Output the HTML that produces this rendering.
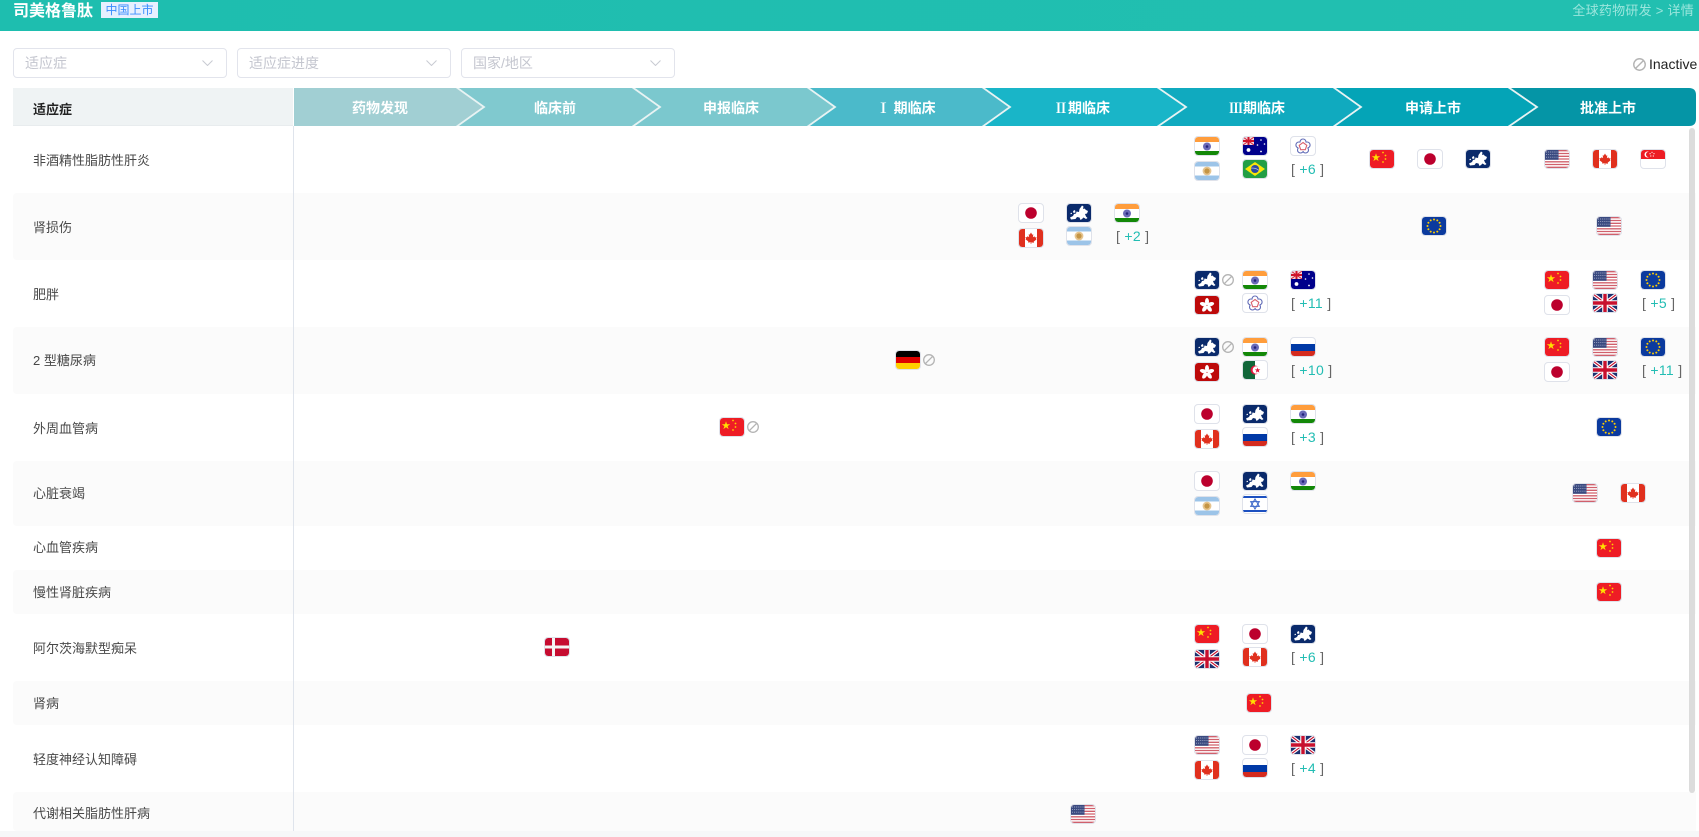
<!DOCTYPE html>
<html lang="zh"><head><meta charset="utf-8"><title>司美格鲁肽</title>
<style>
*{box-sizing:border-box}
html,body{margin:0;padding:0;width:1699px;height:837px;overflow:hidden;background:#fff}
body{position:relative;font-family:"Liberation Sans","Noto Sans CJK SC",sans-serif;color:#444}
div,span,svg.f,svg.n{position:absolute}
.hd{left:0;top:0;width:1699px;height:31px;background:linear-gradient(90deg,#1ebeaf,#22bfb0)}
.t{left:13px;top:0;font-size:16px;line-height:24px;font-weight:700;color:#fff;white-space:nowrap}
.tag{left:101px;top:2px;width:57px;height:16px;background:#e6f0ff;color:#3a8dff;font-size:12px;line-height:16px;text-align:center;white-space:nowrap}
.bc{right:5px;top:1px;font-size:13px;line-height:20px;letter-spacing:.25px;color:#9be6dd;white-space:nowrap}
.s{top:48px;width:214px;height:30px;border:1px solid #e2e4ec;border-radius:4px;background:#fff}
.s span{left:11px;top:4px;font-size:14px;line-height:20px;color:#c4c6cf;white-space:nowrap}
.s svg{position:absolute;right:13px;top:11px}
.ina{left:1649px;top:55px;font-size:14px;line-height:18px;color:#222;white-space:nowrap}
.th0{left:13px;top:88px;width:280px;height:38px;background:#eff3f4;border-bottom:1px solid #e8ecee}
.th0 span{left:20px;top:12px;font-size:13px;line-height:20px;font-weight:700;color:#222;white-space:nowrap}
.stg{top:88px;height:38px;width:120px;font-family:"Noto Sans CJK SC",sans-serif;line-height:40px;font-size:14px;font-weight:700;color:#fff;text-align:center;white-space:nowrap}
.stg i{font-style:normal;font-family:"Noto Serif CJK SC",serif;font-weight:700}
.r{left:13px;width:1683px;background:#fbfbfb;border-radius:4px 0 0 4px}
.l{left:33px;width:250px;font-size:13px;line-height:20px;color:#484848;white-space:nowrap}
.f{width:24px;height:18px;border-radius:3px;outline:1px solid #dfe2ea;overflow:hidden}
.n{width:12px;height:12px}
.m{font-size:14px;line-height:18px;letter-spacing:.3px;white-space:pre;color:#666}
.m b{font-weight:400;color:#22bdb3}
</style></head><body>
<svg width="0" height="0" style="position:absolute">
<defs>
<symbol id="cn" viewBox="0 0 24 18"><rect width="24" height="18" fill="#ee1c25"/><path d="M6 3.200l1 3h3.200l-2.600 1.900 1 3-2.600-1.900-2.600 1.900 1-3-2.600-1.900h3.200z" fill="#ffe000"/><g fill="#ffcf00"><circle cx="13" cy="2.500" r=".9"/><circle cx="15.500" cy="5.500" r=".9"/><circle cx="15.500" cy="9" r=".9"/><circle cx="13" cy="12" r=".9"/></g></symbol>
<symbol id="jp" viewBox="0 0 24 18"><rect width="24" height="18" fill="#fff"/><circle cx="12" cy="9" r="5.800" fill="#bc002d"/></symbol>
<symbol id="in" viewBox="0 0 24 18"><rect width="24" height="18" fill="#fff"/><rect width="24" height="5" fill="#ff9d3c"/><rect y="14" width="24" height="4" fill="#138808"/><circle cx="12" cy="9.500" r="4" fill="#6a6ab8"/><circle cx="12" cy="9.500" r="1.300" fill="#23237a"/></symbol>
<symbol id="au" viewBox="0 0 24 18"><rect width="24" height="18" fill="#00008b"/><rect width="11" height="8" fill="#f3d6da"/><path d="M4.500 0h2v8h-2zM0 3h11v2H0z" fill="#cf142b"/><path d="M0 0l11 8M11 0L0 8" stroke="#cf142b" stroke-width=".8"/><g fill="#fff"><circle cx="5.500" cy="13" r="1.900"/><circle cx="18" cy="3" r=".8"/><circle cx="18" cy="14.500" r=".9"/><circle cx="14.500" cy="8" r=".8"/><circle cx="21.500" cy="7" r=".8"/></g></symbol>
<symbol id="tw" viewBox="0 0 24 18"><rect width="24" height="18" fill="#fff"/><g fill="#fff" stroke="#5f6ab6" stroke-width="1.100"><circle cx="12" cy="5" r="3"/><circle cx="16.100" cy="8" r="3"/><circle cx="14.500" cy="13" r="3"/><circle cx="9.500" cy="13" r="3"/><circle cx="7.900" cy="8" r="3"/></g><circle cx="12" cy="9.300" r="4.800" fill="#fff"/><path d="M12 5.500l3.800 2.800-1.500 4.400H9.700L8.200 8.300z" fill="#fff" stroke="#d9606c" stroke-width="1.100"/></symbol>
<symbol id="ar" viewBox="0 0 24 18"><rect width="24" height="18" fill="#fff"/><rect width="24" height="4.500" fill="#9cc4e8"/><rect y="13.500" width="24" height="4.500" fill="#9cc4e8"/><circle cx="12" cy="9" r="4.400" fill="#e6c48e"/><circle cx="12" cy="9" r="2.600" fill="#c49545"/></symbol>
<symbol id="br" viewBox="0 0 24 18"><rect width="24" height="18" fill="#229e45"/><path d="M12 2l10 7-10 7L2 9z" fill="#f8e509"/><circle cx="12" cy="9" r="4" fill="#2b49a3"/><path d="M8.200 8.200q4-.6 7.500 2" stroke="#ddd" stroke-width=".6" fill="none"/></symbol>
<symbol id="em" viewBox="0 0 24 18"><rect width="24" height="18" fill="#0a2a6b"/><path d="M15 1.500l1.500 1-.5 2.500 1.500-.5 1.500 1.500 2 1-1 2.500-2 .5 1 2.500 1.500 1.500-1.500 1-2.500-1.500-1.500 1.500-1.500 1-1-2.500-2.500-.5-1.500 2-4.500.5-1-2 3-1.500 1-2 2-.5.500-2 2.500.5.500-3 1.500-2z" fill="#fff"/><path d="M6 7l2-1 .5 2.500-2 .5zM3.500 9l1.300-.3.200 1.200-1.300.3z" fill="#fff"/></symbol>
<symbol id="eu" viewBox="0 0 24 18"><rect width="24" height="18" fill="#0b3a9e"/><g fill="#ffcc00"><circle cx="12" cy="2.500" r="1"/><circle cx="15.300" cy="3.400" r="1"/><circle cx="17.600" cy="5.700" r="1"/><circle cx="18.500" cy="9" r="1"/><circle cx="17.600" cy="12.300" r="1"/><circle cx="15.300" cy="14.600" r="1"/><circle cx="12" cy="15.500" r="1"/><circle cx="8.700" cy="14.600" r="1"/><circle cx="6.400" cy="12.300" r="1"/><circle cx="5.500" cy="9" r="1"/><circle cx="6.400" cy="5.700" r="1"/><circle cx="8.700" cy="3.400" r="1"/></g></symbol>
<symbol id="us" viewBox="0 0 24 18"><rect width="24" height="18" fill="#fff"/><path d="M0 .7h24M0 3.500h24M0 6.300h24M0 9h24M0 11.800h24M0 14.500h24M0 17.300h24" stroke="#d0606c" stroke-width="1.300"/><rect width="13.500" height="9.800" fill="#3a4a80"/><path d="M1 2h12M1 4.600h12M1 7.200h12" stroke="#a3abc9" stroke-width=".9" stroke-dasharray="1 1.100"/></symbol>
<symbol id="ca" viewBox="0 0 24 18"><rect width="24" height="18" fill="#fff"/><rect width="6" height="18" fill="#e0301e"/><rect x="18" width="6" height="18" fill="#e0301e"/><path d="M12 3.500l1.300 2.300 1-.5-.4 3 1.600-1 .4 1.100 1.700-.2-.6 1.800.6.400-2.900 2.200.3 1.100-2.700-.3V15h-.6v-1.800l-2.700.3.300-1.100-2.900-2.200.6-.4-.6-1.800 1.700.2.400-1.100 1.600 1-.4-3 1 .5z" fill="#e0301e"/></symbol>
<symbol id="sg" viewBox="0 0 24 18"><rect width="24" height="18" fill="#fff"/><rect width="24" height="9" fill="#ed1c24"/><circle cx="6.500" cy="4.500" r="3" fill="#fff"/><circle cx="7.700" cy="4.500" r="2.700" fill="#ed1c24"/><g fill="#fff"><circle cx="11" cy="2.300" r=".6"/><circle cx="13" cy="3.700" r=".6"/><circle cx="12.300" cy="6" r=".6"/><circle cx="9.800" cy="6" r=".6"/><circle cx="9.100" cy="3.700" r=".6"/></g></symbol>
<symbol id="hk" viewBox="0 0 24 18"><rect width="24" height="18" fill="#bd0a0a"/><g fill="#fff"><ellipse cx="12" cy="5.500" rx="2" ry="3.500"/><ellipse cx="12" cy="5.500" rx="2" ry="3.500" transform="rotate(72 12 9.400)"/><ellipse cx="12" cy="5.500" rx="2" ry="3.500" transform="rotate(144 12 9.400)"/><ellipse cx="12" cy="5.500" rx="2" ry="3.500" transform="rotate(216 12 9.400)"/><ellipse cx="12" cy="5.500" rx="2" ry="3.500" transform="rotate(288 12 9.400)"/></g></symbol>
<symbol id="ru" viewBox="0 0 24 18"><rect width="24" height="18" fill="#fff"/><rect y="6" width="24" height="7" fill="#0039a6"/><rect y="13" width="24" height="5" fill="#d52b1e"/></symbol>
<symbol id="dz" viewBox="0 0 24 18"><rect width="24" height="18" fill="#fff"/><rect width="12" height="18" fill="#11663a"/><circle cx="12" cy="9" r="4.500" fill="#e3173e"/><circle cx="13.300" cy="9" r="3.700" fill="#fff"/><path d="M14.500 6.500l.8 1.900 2-.1-1.500 1.300.6 2-1.800-1.100-1.700 1.100.5-2-1.500-1.300 2 .1z" fill="#e3173e"/></symbol>
<symbol id="il" viewBox="0 0 24 18"><rect width="24" height="18" fill="#fff"/><rect y="1" width="24" height="2" fill="#1c50c0"/><rect y="15" width="24" height="2" fill="#1c50c0"/><path d="M12 4l4.300 7.400H7.700zM12 14L7.700 6.600h8.600z" fill="none" stroke="#3a66c8" stroke-width="1"/></symbol>
<symbol id="de" viewBox="0 0 24 18"><rect width="24" height="6" fill="#000"/><rect y="6" width="24" height="6" fill="#dd0000"/><rect y="12" width="24" height="6" fill="#ffce00"/></symbol>
<symbol id="dk" viewBox="0 0 24 18"><rect width="24" height="18" fill="#c60c30"/><rect x="7" width="3" height="18" fill="#f4f4f4"/><rect y="7.500" width="24" height="3" fill="#f4f4f4"/></symbol>
<symbol id="gb" viewBox="0 0 24 18"><rect width="24" height="18" fill="#1b2f6e"/><path d="M0 0l24 18M24 0L0 18" stroke="#fff" stroke-width="3.400"/><path d="M0 0l24 18M24 0L0 18" stroke="#c8102e" stroke-width="1.100"/><path d="M12 0v18M0 9h24" stroke="#fff" stroke-width="5.600"/><path d="M12 0v18M0 9h24" stroke="#c8102e" stroke-width="3.400"/></symbol>
<symbol id="no" viewBox="0 0 12 12"><circle cx="6" cy="6" r="5.300" fill="none" stroke="#b4b4b4" stroke-width="1.300"/><path d="M2.400 9.600L9.600 2.400" stroke="#b4b4b4" stroke-width="1.300"/></symbol>
</defs></svg>

<div class="hd"></div>
<div class="t">司美格鲁肽</div>
<div class="tag">中国上市</div>
<div class="bc">全球药物研发 &gt; 详情</div>

<div class="s" style="left:13px"><span>适应症</span><svg width="11" height="6" viewBox="0 0 11 6"><path d="M.5.500l5 5 5-5" fill="none" stroke="#c8cad2"/></svg></div>
<div class="s" style="left:237px"><span>适应症进度</span><svg width="11" height="6" viewBox="0 0 11 6"><path d="M.5.500l5 5 5-5" fill="none" stroke="#c8cad2"/></svg></div>
<div class="s" style="left:461px"><span>国家/地区</span><svg width="11" height="6" viewBox="0 0 11 6"><path d="M.5.500l5 5 5-5" fill="none" stroke="#c8cad2"/></svg></div>
<svg class="n" style="left:1633px;top:58px;width:13px;height:13px"><use href="#no"/></svg>
<div class="ina">Inactive</div>

<!-- striped rows -->
<div class="r" style="top:193px;height:67px"></div>
<div class="r" style="top:327px;height:67px"></div>
<div class="r" style="top:461px;height:65px"></div>
<div class="r" style="top:570px;height:44px"></div>
<div class="r" style="top:681px;height:44px"></div>
<div class="r" style="top:792px;height:39px"></div>
<div style="left:0;top:831px;width:1699px;height:6px;background:#f6f7f8"></div>
<div style="left:293px;top:126px;width:1px;height:705px;background:#dfe4ec"></div>
<div style="left:1689px;top:128px;width:6px;height:665px;background:#dcdcdc;border-radius:3px"></div>

<!-- table head -->
<div class="th0"><span>适应症</span></div>
<svg style="position:absolute;left:0;top:88px" width="1699" height="38" viewBox="0 88 1699 38">
<rect x="294" y="88" width="900" height="38" fill="#a1cfd3"/>
<path d="M456 88h176l28 19-28 19H456l28-19z" fill="#80c9cf"/>
<path d="M632 88h175l28 19-28 19H632l28-19z" fill="#7bc8ce"/>
<path d="M807 88h175l28 19-28 19H807l28-19z" fill="#4bbaca"/>
<path d="M982 88h175l29 19-29 19H982l28-19z" fill="#19b5c8"/>
<path d="M1157 88h176l28 19-28 19h-176l29-19z" fill="#10aabf"/>
<path d="M1333 88h175l29 19-29 19h-175l28-19z" fill="#04a4b7"/>
<path d="M1508 88h181q7 0 7 7v24q0 7-7 7h-181l29-19z" fill="#0595a6"/>
<path d="M456 87l28 20-28 20M632 87l28 20-28 20M807 87l28 20-28 20M982 87l28 20-28 20M1157 87l29 20-29 20M1333 87l28 20-28 20M1508 87l29 20-29 20" fill="none" stroke="#e8f3f3" stroke-width="1.800"/>
</svg>
<div class="stg" style="left:320px">药物发现</div>
<div class="stg" style="left:495px">临床前</div>
<div class="stg" style="left:671px">申报临床</div>
<div class="stg" style="left:846px"><i>Ⅰ</i> 期临床</div>
<div class="stg" style="left:1022px"><i>Ⅱ</i>期临床</div>
<div class="stg" style="left:1197px"><i>Ⅲ</i>期临床</div>
<div class="stg" style="left:1373px">申请上市</div>
<div class="stg" style="left:1548px">批准上市</div>

<!-- row labels -->
<div class="l" style="top:151px">非酒精性脂肪性肝炎</div>
<div class="l" style="top:218px">肾损伤</div>
<div class="l" style="top:285px">肥胖</div>
<div class="l" style="top:351px">2 型糖尿病</div>
<div class="l" style="top:419px">外周血管病</div>
<div class="l" style="top:484px">心脏衰竭</div>
<div class="l" style="top:538px">心血管疾病</div>
<div class="l" style="top:583px">慢性肾脏疾病</div>
<div class="l" style="top:639px">阿尔茨海默型痴呆</div>
<div class="l" style="top:694px">肾病</div>
<div class="l" style="top:750px">轻度神经认知障碍</div>
<div class="l" style="top:804px">代谢相关脂肪性肝病</div>

<!-- R1 -->
<svg class="f" style="left:1195px;top:137px"><use href="#in"/></svg>
<svg class="f" style="left:1243px;top:137px"><use href="#au"/></svg>
<svg class="f" style="left:1291px;top:137px"><use href="#tw"/></svg>
<svg class="f" style="left:1195px;top:162px"><use href="#ar"/></svg>
<svg class="f" style="left:1243px;top:160px"><use href="#br"/></svg>
<div class="m" style="left:1291px;top:160px">[ <b>+6</b> ]</div>
<svg class="f" style="left:1370px;top:150px"><use href="#cn"/></svg>
<svg class="f" style="left:1418px;top:150px"><use href="#jp"/></svg>
<svg class="f" style="left:1466px;top:150px"><use href="#em"/></svg>
<svg class="f" style="left:1545px;top:150px"><use href="#us"/></svg>
<svg class="f" style="left:1593px;top:150px"><use href="#ca"/></svg>
<svg class="f" style="left:1641px;top:150px"><use href="#sg"/></svg>
<!-- R2 -->
<svg class="f" style="left:1019px;top:204px"><use href="#jp"/></svg>
<svg class="f" style="left:1067px;top:204px"><use href="#em"/></svg>
<svg class="f" style="left:1115px;top:204px"><use href="#in"/></svg>
<svg class="f" style="left:1019px;top:229px"><use href="#ca"/></svg>
<svg class="f" style="left:1067px;top:227px"><use href="#ar"/></svg>
<div class="m" style="left:1116px;top:227px">[ <b>+2</b> ]</div>
<svg class="f" style="left:1422px;top:217px"><use href="#eu"/></svg>
<svg class="f" style="left:1597px;top:217px"><use href="#us"/></svg>
<!-- R3 -->
<svg class="f" style="left:1195px;top:271px"><use href="#em"/></svg>
<svg class="n" style="left:1222px;top:274px"><use href="#no"/></svg>
<svg class="f" style="left:1243px;top:271px"><use href="#in"/></svg>
<svg class="f" style="left:1291px;top:271px"><use href="#au"/></svg>
<svg class="f" style="left:1195px;top:296px"><use href="#hk"/></svg>
<svg class="f" style="left:1243px;top:294px"><use href="#tw"/></svg>
<div class="m" style="left:1291px;top:294px">[ <b>+11</b> ]</div>
<svg class="f" style="left:1545px;top:271px"><use href="#cn"/></svg>
<svg class="f" style="left:1593px;top:271px"><use href="#us"/></svg>
<svg class="f" style="left:1641px;top:271px"><use href="#eu"/></svg>
<svg class="f" style="left:1545px;top:296px"><use href="#jp"/></svg>
<svg class="f" style="left:1593px;top:294px"><use href="#gb"/></svg>
<div class="m" style="left:1642px;top:294px">[ <b>+5</b> ]</div>
<!-- R4 -->
<svg class="f" style="left:896px;top:351px"><use href="#de"/></svg>
<svg class="n" style="left:923px;top:354px"><use href="#no"/></svg>
<svg class="f" style="left:1195px;top:338px"><use href="#em"/></svg>
<svg class="n" style="left:1222px;top:341px"><use href="#no"/></svg>
<svg class="f" style="left:1243px;top:338px"><use href="#in"/></svg>
<svg class="f" style="left:1291px;top:338px"><use href="#ru"/></svg>
<svg class="f" style="left:1195px;top:363px"><use href="#hk"/></svg>
<svg class="f" style="left:1243px;top:361px"><use href="#dz"/></svg>
<div class="m" style="left:1291px;top:361px">[ <b>+10</b> ]</div>
<svg class="f" style="left:1545px;top:338px"><use href="#cn"/></svg>
<svg class="f" style="left:1593px;top:338px"><use href="#us"/></svg>
<svg class="f" style="left:1641px;top:338px"><use href="#eu"/></svg>
<svg class="f" style="left:1545px;top:363px"><use href="#jp"/></svg>
<svg class="f" style="left:1593px;top:361px"><use href="#gb"/></svg>
<div class="m" style="left:1642px;top:361px">[ <b>+11</b> ]</div>
<!-- R5 -->
<svg class="f" style="left:720px;top:418px"><use href="#cn"/></svg>
<svg class="n" style="left:747px;top:421px"><use href="#no"/></svg>
<svg class="f" style="left:1195px;top:405px"><use href="#jp"/></svg>
<svg class="f" style="left:1243px;top:405px"><use href="#em"/></svg>
<svg class="f" style="left:1291px;top:405px"><use href="#in"/></svg>
<svg class="f" style="left:1195px;top:430px"><use href="#ca"/></svg>
<svg class="f" style="left:1243px;top:428px"><use href="#ru"/></svg>
<div class="m" style="left:1291px;top:428px">[ <b>+3</b> ]</div>
<svg class="f" style="left:1597px;top:418px"><use href="#eu"/></svg>
<!-- R6 -->
<svg class="f" style="left:1195px;top:472px"><use href="#jp"/></svg>
<svg class="f" style="left:1243px;top:472px"><use href="#em"/></svg>
<svg class="f" style="left:1291px;top:472px"><use href="#in"/></svg>
<svg class="f" style="left:1195px;top:497px"><use href="#ar"/></svg>
<svg class="f" style="left:1243px;top:495px"><use href="#il"/></svg>
<svg class="f" style="left:1573px;top:484px"><use href="#us"/></svg>
<svg class="f" style="left:1621px;top:484px"><use href="#ca"/></svg>
<!-- R7, R8 -->
<svg class="f" style="left:1597px;top:539px"><use href="#cn"/></svg>
<svg class="f" style="left:1597px;top:583px"><use href="#cn"/></svg>
<!-- R9 -->
<svg class="f" style="left:545px;top:638px"><use href="#dk"/></svg>
<svg class="f" style="left:1195px;top:625px"><use href="#cn"/></svg>
<svg class="f" style="left:1243px;top:625px"><use href="#jp"/></svg>
<svg class="f" style="left:1291px;top:625px"><use href="#em"/></svg>
<svg class="f" style="left:1195px;top:650px"><use href="#gb"/></svg>
<svg class="f" style="left:1243px;top:648px"><use href="#ca"/></svg>
<div class="m" style="left:1291px;top:648px">[ <b>+6</b> ]</div>
<!-- R10 -->
<svg class="f" style="left:1247px;top:694px"><use href="#cn"/></svg>
<!-- R11 -->
<svg class="f" style="left:1195px;top:736px"><use href="#us"/></svg>
<svg class="f" style="left:1243px;top:736px"><use href="#jp"/></svg>
<svg class="f" style="left:1291px;top:736px"><use href="#gb"/></svg>
<svg class="f" style="left:1195px;top:761px"><use href="#ca"/></svg>
<svg class="f" style="left:1243px;top:759px"><use href="#ru"/></svg>
<div class="m" style="left:1291px;top:759px">[ <b>+4</b> ]</div>
<!-- R12 -->
<svg class="f" style="left:1071px;top:805px"><use href="#us"/></svg>
</body></html>
